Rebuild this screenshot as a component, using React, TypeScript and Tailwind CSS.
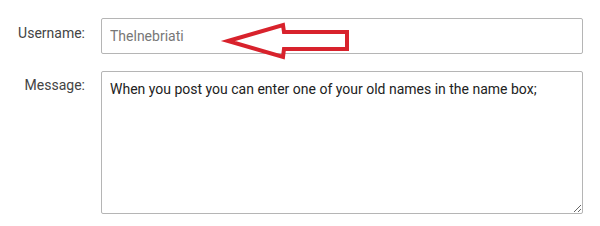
export default function App() {
  return (
    <div className="w-[600px] h-[226px] bg-white font-['Roboto',sans-serif] text-[14px] text-[#333]">
      <div className="grid grid-cols-[85px_482px] gap-x-4 gap-y-[17px] pt-[18px]">
        {/* Username */}
        <label className="text-right pt-[5px] leading-5 text-[#444]">Username:</label>
        <div className="relative">
          <input
            type="text"
            defaultValue="Thelnebriati"
            className="w-full h-[36px] rounded-[2px] border border-[#b5b5b5] px-[8px] text-[14px] text-[#777] outline-none"
          />
          {/* callout arrow */}
          <svg
            className="absolute left-0 top-0 overflow-visible pointer-events-none"
            width="482"
            height="36"
            viewBox="0 0 482 36"
            fill="none"
          >
            <polygon
              points="127,23 182,7 183,14 246,14 246,31 183,31 182,39"
              stroke="#d8222c"
              strokeWidth="4"
              strokeLinejoin="miter"
            />
          </svg>
        </div>

        {/* Message */}
        <label className="text-right pt-[4px] leading-5 text-[#444]">Message:</label>
        <textarea
          defaultValue="When you post you can enter one of your old names in the name box;"
          className="w-full h-[143px] rounded-[2px] border border-[#b5b5b5] px-[8px] py-[7px] text-[14px] leading-5 text-[#222] outline-none"
        />
      </div>
    </div>
  );
}
